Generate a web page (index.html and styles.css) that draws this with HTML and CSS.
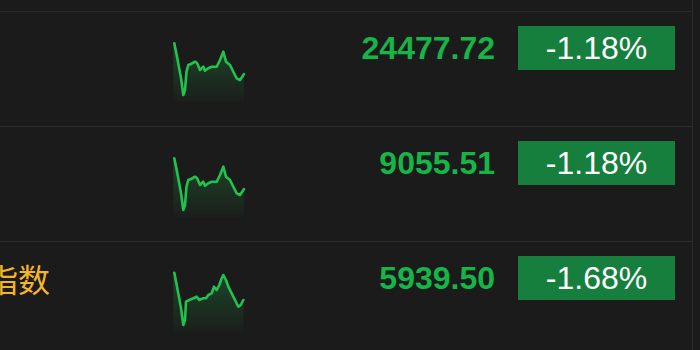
FILE: index.html
```html
<!DOCTYPE html>
<html lang="zh">
<head>
<meta charset="utf-8">
<link rel="stylesheet" href="styles.css">
</head>
<body>
<div class="table">
  <div class="row row-prev">
    <div class="name">上证指数</div>
    <div class="spark"></div>
    <div class="price">3000.00</div>
    <div class="badge">-1.00%</div>
  </div>
  <div class="row">
    <div class="name">恒生指数</div>
    <svg class="spark" viewBox="0 0 74 62" width="74" height="62">
      <defs>
        <linearGradient id="g1" x1="0" y1="0" x2="0" y2="1">
          <stop offset="0" stop-color="#1fb94c" stop-opacity="0.28"/>
          <stop offset="1" stop-color="#1fb94c" stop-opacity="0.02"/>
        </linearGradient>
      </defs>
      <polygon fill="url(#g1)" points="0.3,3.3 3.7,15 8,38 10.3,55 12,50 13.5,31.7 15.3,25 18,24 22,21.7 24,23 27,30 30.3,26.7 32,30.7 35.3,28.3 38.7,26.7 43.7,26.7 47,20 50.3,11.7 53,21.7 57,25 60.3,31.7 63.7,38.3 67,40 71,34 71,62 0.3,62"/>
      <polyline fill="none" stroke="#22c24f" stroke-width="2.6" stroke-linejoin="round" stroke-linecap="round" points="1.3,3.3 3.7,15 8,38 10.3,55 12,50 13.5,31.7 15.3,25 18,24 22,21.7 24,23 27,30 30.3,26.7 32,30.7 35.3,28.3 38.7,26.7 43.7,26.7 47,20 50.3,11.7 53,21.7 57,25 60.3,31.7 63.7,38.3 67,40 71,34"/>
    </svg>
    <div class="price">24477.72</div>
    <div class="badge">-1.18%</div>
  </div>
  <div class="row">
    <div class="name">国企指数</div>
    <svg class="spark" viewBox="0 0 74 62" width="74" height="62">
      <defs>
        <linearGradient id="g2" x1="0" y1="0" x2="0" y2="1">
          <stop offset="0" stop-color="#1fb94c" stop-opacity="0.28"/>
          <stop offset="1" stop-color="#1fb94c" stop-opacity="0.02"/>
        </linearGradient>
      </defs>
      <polygon fill="url(#g2)" points="0.3,3.3 3.7,15 8,38 10.3,55 12,50 13.5,31.7 15.3,25 18,24 22,21.7 24,23 27,30 30.3,26.7 32,30.7 35.3,28.3 38.7,26.7 43.7,26.7 47,20 50.3,11.7 53,21.7 57,25 60.3,31.7 63.7,38.3 67,40 71,34 71,62 0.3,62"/>
      <polyline fill="none" stroke="#22c24f" stroke-width="2.6" stroke-linejoin="round" stroke-linecap="round" points="1.3,3.3 3.7,15 8,38 10.3,55 12,50 13.5,31.7 15.3,25 18,24 22,21.7 24,23 27,30 30.3,26.7 32,30.7 35.3,28.3 38.7,26.7 43.7,26.7 47,20 50.3,11.7 53,21.7 57,25 60.3,31.7 63.7,38.3 67,40 71,34"/>
    </svg>
    <div class="price">9055.51</div>
    <div class="badge">-1.18%</div>
  </div>
  <div class="row">
    <div class="name">恒生科技指数</div>
    <svg class="spark" viewBox="0 0 74 62" width="74" height="62">
      <defs>
        <linearGradient id="g3" x1="0" y1="0" x2="0" y2="1">
          <stop offset="0" stop-color="#1fb94c" stop-opacity="0.28"/>
          <stop offset="1" stop-color="#1fb94c" stop-opacity="0.02"/>
        </linearGradient>
      </defs>
      <polygon fill="url(#g3)" points="0.3,2.7 3.7,15 8,38 10.3,55 12,50 13,31.7 16.3,30 20.3,28.3 23.7,26.7 26.3,30 29.7,28.3 33,28.3 35.3,25 38.7,23.3 41,16.7 43.7,20 46.3,15 48.7,8.3 50.3,5 53,10 55.3,16.7 58.7,23.3 62,30 65.3,36.7 67.7,35 70.3,30 70.3,62 0.3,62"/>
      <polyline fill="none" stroke="#22c24f" stroke-width="2.6" stroke-linejoin="round" stroke-linecap="round" points="1.3,2.7 3.7,15 8,38 10.3,55 12,50 13,31.7 16.3,30 20.3,28.3 23.7,26.7 26.3,30 29.7,28.3 33,28.3 35.3,25 38.7,23.3 41,16.7 43.7,20 46.3,15 48.7,8.3 50.3,5 53,10 55.3,16.7 58.7,23.3 62,30 65.3,36.7 67.7,35 70.3,30"/>
    </svg>
    <div class="price">5939.50</div>
    <div class="badge">-1.68%</div>
  </div>
</div>
</body>
</html>
```
FILE: styles.css
```css
html, body {
  margin: 0;
  padding: 0;
  background: #1b1b1b;
  overflow: hidden;
}

.table {
  margin-left: -142px;
  margin-top: -104px;
  width: 834px;
  border-right: 1px solid #2a2a2a;
  font-family: "Liberation Sans", Arial, sans-serif;
}

.row {
  display: grid;
  grid-template-columns: 315px 74px 1fr 157px;
  align-items: start;
  box-sizing: border-box;
  height: 115px;
  padding: 14px 17px 0 0;
  border-top: 1px solid #2a2a2a;
}

.row-prev {
  visibility: hidden;
}

.name {
  font-family: "Noto Sans CJK SC", "Liberation Sans", sans-serif;
  font-size: 32px;
  line-height: 44px;
  color: #f2b52c;
  white-space: nowrap;
}

.spark {
  display: block;
  margin-top: 14px;
}

.price {
  font-size: 32px;
  font-weight: bold;
  line-height: 44px;
  color: #15b548;
  text-align: right;
  padding-right: 23px;
}

.badge {
  background: #167f3e;
  color: #ffffff;
  font-size: 32px;
  line-height: 44px;
  height: 44px;
  text-align: center;
}
```
